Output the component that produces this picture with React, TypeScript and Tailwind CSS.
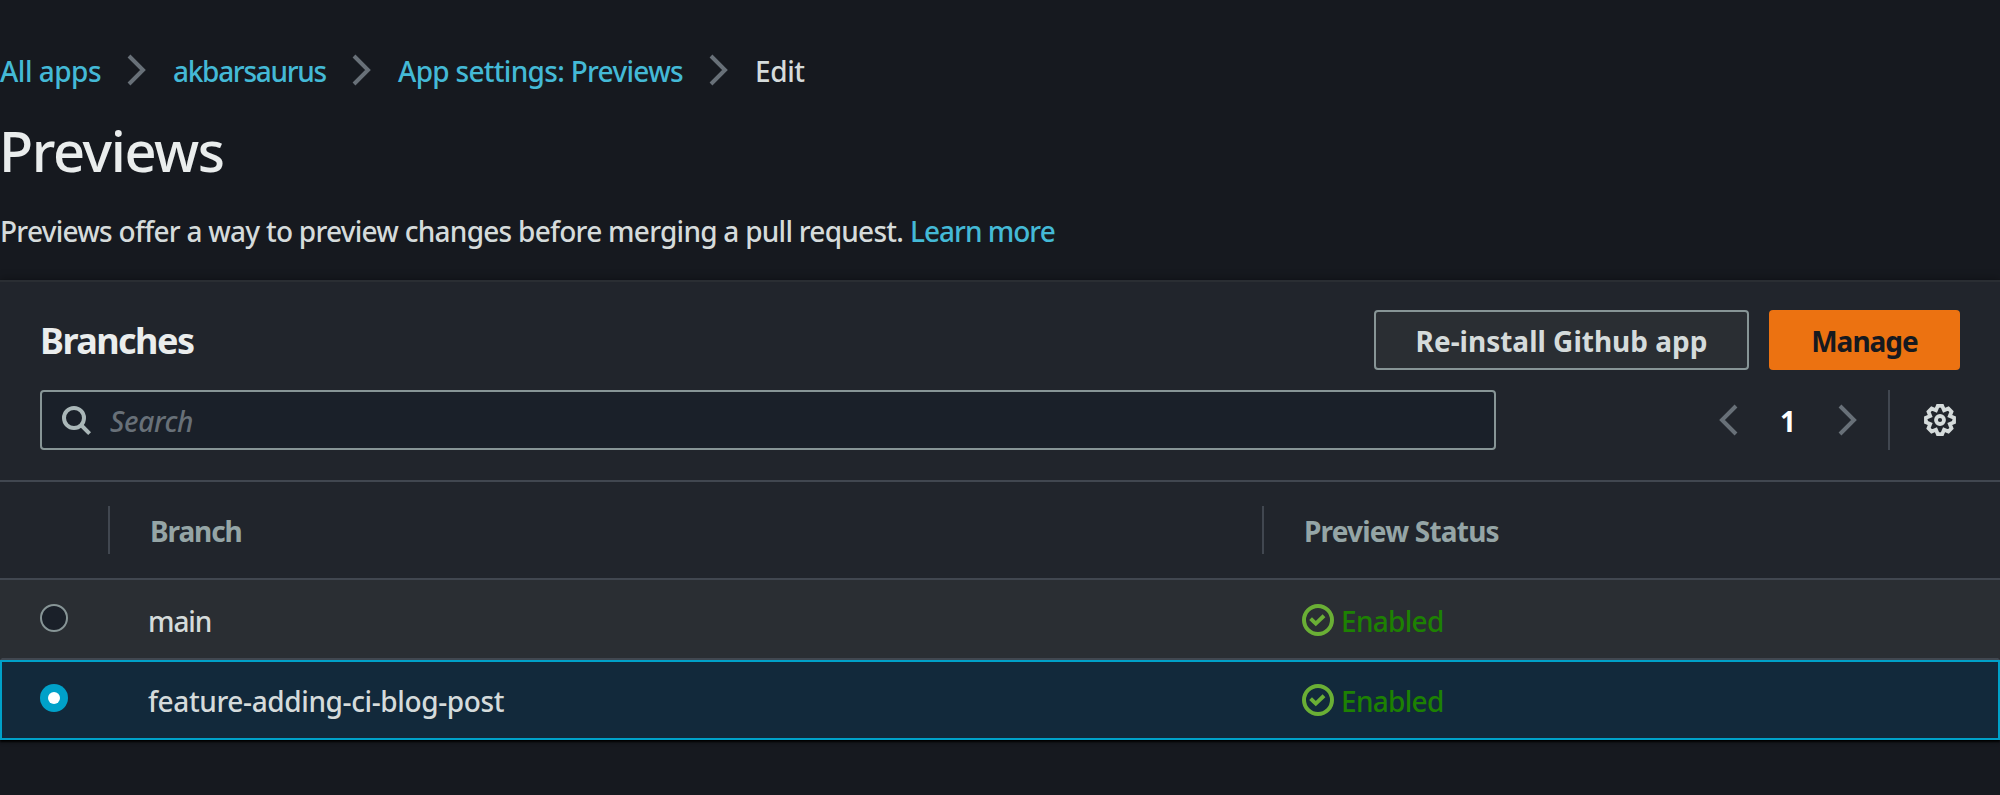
const gearPath = (() => {
  const pts: string[] = [];
  const at = (deg: number, r: number) => {
    const a = (deg * Math.PI) / 180;
    pts.push(`${(16 + r * Math.cos(a)).toFixed(2)} ${(16 + r * Math.sin(a)).toFixed(2)}`);
  };
  for (let k = 0; k < 8; k++) {
    at(k * 45 - 9, 14.2);
    at(k * 45 + 9, 14.2);
    at(k * 45 + 22.5, 10.6);
  }
  return `M${pts.join("L")}Z`;
})();

function Chevron({ left = false }: { left?: boolean }) {
  return (
    <svg viewBox="0 0 32 32" className="h-8 w-8 shrink-0" fill="none" stroke="#687078" strokeWidth={4}>
      <path d={left ? "M24 2 10 16l14 14" : "M8 2l14 14L8 30"} />
    </svg>
  );
}

function SearchIcon() {
  return (
    <svg viewBox="0 0 32 32" className="h-8 w-8 shrink-0" fill="none" stroke="#aab7b8" strokeWidth={4}>
      <circle cx="14" cy="14" r="10" />
      <path d="M21 21l8.6 8.6" />
    </svg>
  );
}

function GearIcon() {
  return (
    <svg viewBox="0 0 32 32" className="h-8 w-8 shrink-0" fill="none" stroke="#d5dbdb" strokeWidth={3.8}>
      <path d={gearPath} />
      <circle cx="16" cy="16" r="4" />
    </svg>
  );
}

function StatusIcon() {
  return (
    <svg viewBox="0 0 32 32" className="h-8 w-8 shrink-0" fill="none" stroke="#6aaf35" strokeWidth={4}>
      <circle cx="16" cy="16" r="14" />
      <path d="M8.6 14.6l5.2 5L22 11.8" />
    </svg>
  );
}

function Radio({ checked }: { checked: boolean }) {
  return checked ? (
    <span className="mb-1 flex h-7 w-7 items-center justify-center rounded-full bg-[#00a1c9]">
      <span className="h-3 w-3 rounded-full bg-white" />
    </span>
  ) : (
    <span className="mb-1 h-7 w-7 rounded-full border-2 border-[#879596] bg-[#1a2029]" />
  );
}

function Row({ name, checked, className, tracking }: { name: string; checked: boolean; className: string; tracking: string }) {
  return (
    <div className={`flex h-20 items-center ${className}`}>
      <div className="flex w-[146px] items-center pl-[38px]">
        <Radio checked={checked} />
      </div>
      <div className={`w-[1154px] pt-[2px] text-[#d5dbdb] ${tracking}`}>{name}</div>
      <div className="flex items-center">
        <StatusIcon />
        <span className="ml-[7px] pt-[2px] tracking-[-0.7px] text-[#1d8102]">Enabled</span>
      </div>
    </div>
  );
}

export default function App() {
  return (
    <div className="h-[795px] w-[2000px] overflow-hidden bg-[#16191f] pt-10 font-['Noto_Sans',sans-serif] text-[28px] leading-[40px] font-medium whitespace-nowrap text-[#d5dbdb]">
      <nav className="flex h-[60px] items-center text-[#44b9d6]">
        <a className="w-[121px] pt-[2px] tracking-[-0.5px]">All apps</a>
        <Chevron />
        <a className="ml-5 w-[173px] pt-[2px] tracking-[-1.3px]">akbarsaurus</a>
        <Chevron />
        <a className="ml-5 w-[305px] pt-[2px] tracking-[-0.7px]">App settings: Previews</a>
        <Chevron />
        <span className="ml-5 pt-[2px] tracking-[-0.4px] text-[#d5dbdb]">Edit</span>
      </nav>
      <h1 className="-ml-px mt-[10px] h-20 text-[56px] leading-[80px] tracking-[-1.4px] text-[#eaeded]">Previews</h1>
      <p className="mt-5 flex h-10 pt-px">
        <span className="w-[910px] tracking-[-0.74px]">
          Previews offer a way to preview changes before merging a pull request.
        </span>
        <a className="tracking-[-1px] text-[#44b9d6]">Learn more</a>
      </p>

      <section className="mt-[30px] border-t-2 border-[#2a2e33] bg-[#21252c] shadow-[0_2px_2px_#000000,0_-2px_8px_rgba(0,0,0,0.25)]">
        <div className="flex h-[200px] flex-col gap-5 border-b-2 border-[#414750] px-10 pt-7">
          <div className="flex h-[60px] items-center justify-between">
            <h2 className="pt-[2px] text-[36px] leading-[60px] font-bold tracking-[-1.55px] text-[#eaeded]">Branches</h2>
            <div className="flex gap-5 font-bold">
              <button className="flex h-[60px] w-[375px] items-center justify-center rounded-[4px] border-2 border-[#879596] bg-[#2a2e33] pt-[2px] tracking-[0px]">
                Re-install Github app
              </button>
              <button className="flex h-[60px] w-[191px] items-center justify-center rounded-[4px] bg-[#ec7211] pt-[2px] tracking-[-1px] text-[#16191f]">
                Manage
              </button>
            </div>
          </div>
          <div className="flex h-[60px] items-center">
            <div className="flex h-[60px] w-[1456px] items-center rounded-[4px] border-2 border-[#879596] bg-[#1a2029] pl-[18px]">
              <SearchIcon />
              <span className="ml-[18px] pt-[2px] tracking-[-0.3px] text-[#687078] italic">Search</span>
            </div>
            <div className="ml-auto flex h-[60px] items-center">
              <Chevron left />
              <span className="flex w-[88px] justify-center pt-[2px] font-bold text-white">1</span>
              <Chevron />
              <span className="mr-[34px] ml-[24px] h-[60px] w-[2px] bg-[#414750]" />
              <span className="mr-1">
                <GearIcon />
              </span>
            </div>
          </div>
        </div>

        <div className="flex h-[98px] items-center border-b-2 border-[#414750] font-bold text-[#95a5a6]">
          <span className="ml-[108px] h-12 w-[2px] bg-[#414750]" />
          <span className="ml-10 w-[1112px] pt-[2px] tracking-[-1.1px]">Branch</span>
          <span className="h-12 w-[2px] bg-[#414750]" />
          <span className="ml-10 pt-[2px] tracking-[-0.8px]">Preview Status</span>
        </div>

        <Row name="main" checked={false} className="border-2 border-x-transparent border-t-transparent border-b-[#414750] bg-[#2a2e33]" tracking="tracking-[-1.1px]" />
        <Row name="feature-adding-ci-blog-post" checked className="border-2 border-[#00a1c9] bg-[#12293b]" tracking="tracking-[-0.38px]" />
      </section>
    </div>
  );
}
